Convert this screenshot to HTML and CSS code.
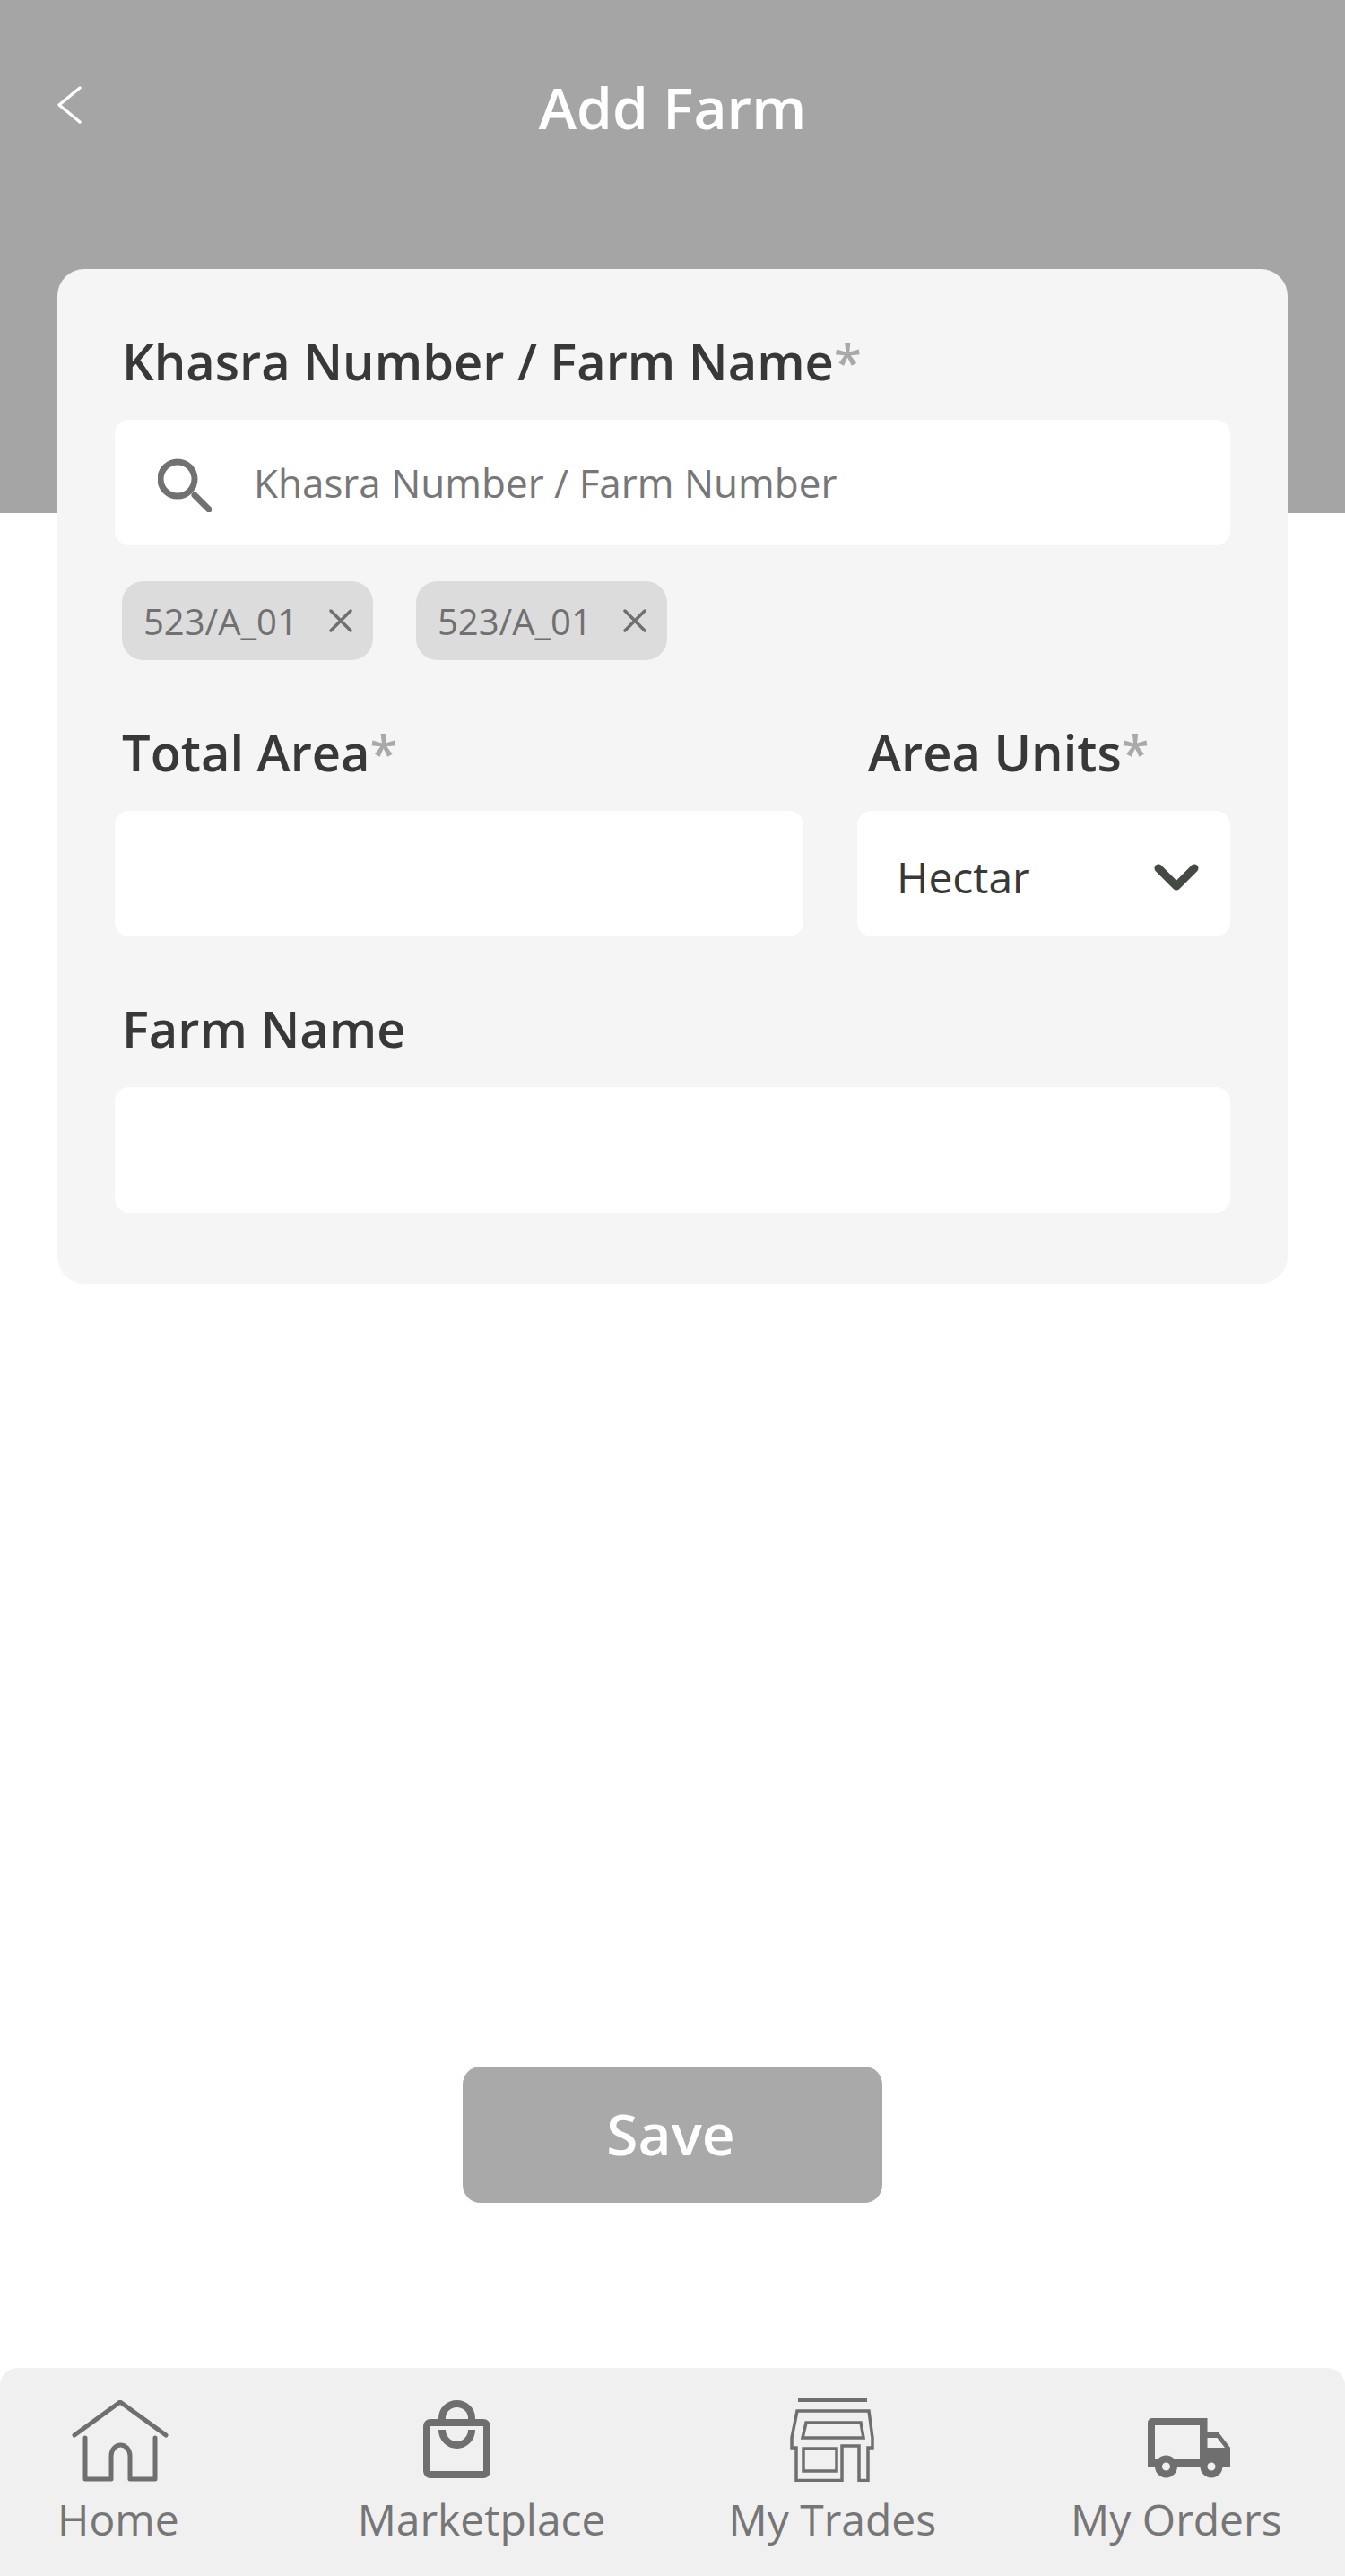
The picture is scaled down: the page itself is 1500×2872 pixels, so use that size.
FILE: index.html
```html
<!DOCTYPE html>
<html lang="en">
<head>
  <meta charset="UTF-8" />
  <meta name="viewport" content="width=device-width, initial-scale=1.0" />
  <title>Add Farm</title>
  <link rel="stylesheet" href="styles.css">
</head>
<body>
  <div class="page">
    <header class="top-bar">
      <svg class="back-icon" width="28" height="42" viewBox="0 0 28 42"><path d="M26 2 L3 21 L26 40" /></svg>
      <h1>Add Farm</h1>
    </header>

    <form class="card">
      <div class="field">
        <label class="field-label" for="khasra">Khasra Number / Farm Name<span class="req">*</span></label>
        <div class="input-box search-box">
          <svg class="search-icon" width="60" height="60" viewBox="0 0 60 60">
            <circle cx="22" cy="23" r="19" />
            <line x1="41" y1="41" x2="57" y2="57" />
          </svg>
          <input id="khasra" type="text" placeholder="Khasra Number / Farm Number" />
        </div>
        <div class="tags">
          <span class="tag">523/A_01
            <svg width="26" height="26" viewBox="0 0 26 26"><path d="M2 2 L24 24 M24 2 L2 24" /></svg>
          </span>
          <span class="tag">523/A_01
            <svg width="26" height="26" viewBox="0 0 26 26"><path d="M2 2 L24 24 M24 2 L2 24" /></svg>
          </span>
        </div>
      </div>

      <div class="field-row">
        <div class="field area-field">
          <label class="field-label" for="area">Total Area<span class="req">*</span></label>
          <input class="input-box" id="area" type="text" />
        </div>
        <div class="field units-field">
          <label class="field-label">Area Units<span class="req">*</span></label>
          <div class="input-box select-box">
            <span>Hectar</span>
            <svg width="50" height="32" viewBox="0 0 50 32"><path d="M5 6 L25 26 L45 6" /></svg>
          </div>
        </div>
      </div>

      <div class="field">
        <label class="field-label" for="farm">Farm Name</label>
        <input class="input-box" id="farm" type="text" />
      </div>
    </form>

    <div class="actions">
      <button type="button" class="save-btn">Save</button>
    </div>

    <nav class="bottom-nav">
      <a class="nav-item nav-home">
        <svg width="108" height="91" viewBox="0 0 108 91"><path d="M3 39 L54 2 L105 39" /><path d="M15 42 V88 H44 V62 A10.5 12 0 0 1 65 62 V88 H93 V42" /></svg>
        <span>Home</span>
      </a>
      <a class="nav-item nav-market">
        <svg width="75" height="87" viewBox="0 0 75 87">
          <rect x="4" y="25" width="67" height="58" rx="4" />
          <path d="M21 22 V20 A16.5 16 0 0 1 54 20 V22" />
          <path d="M21 33 A16.5 17 0 0 0 54 33" />
        </svg>
        <span>Marketplace</span>
      </a>
      <a class="nav-item nav-trades">
        <svg width="94" height="94" viewBox="0 0 94 94">
          <path class="store-bar" d="M9 2.500 H86" />
          <path d="M8 15 H88 L92 45 V56 H87 V92.500 H77 V54 H58 V92.500 H7 V56 H2 V45 Z" />
          <path d="M18 28 H79 L82 45 H14 Z" />
          <rect x="15" y="57" width="37" height="25" />
        </svg>
        <span>My Trades</span>
      </a>
      <a class="nav-item nav-orders">
        <svg width="92" height="67" viewBox="0 0 92 67">
          <path fill-rule="evenodd" d="M5 0 H66.500 V16 H79 L92 33 V54 H0 V5 A5 5 0 0 1 5 0 Z M8 8 V46 H58 V8 Z M66.500 22 V33 H86 L77.500 22 Z" />
          <circle cx="20.500" cy="54" r="8.500" />
          <circle cx="71" cy="54" r="8.500" />
        </svg>
        <span>My Orders</span>
      </a>
    </nav>
  </div>
</body>
</html>
```

FILE: styles.css
```css
* {
  box-sizing: border-box;
}
body {
  margin: 0;
  font-family: "Open Sans", sans-serif;
  background: white;
  color: #383838;
}
.page {
  display: flex;
  flex-direction: column;
  height: 2872px;
}
.top-bar {
  height: 572px;
  flex-shrink: 0;
  background: #a5a5a5;
  display: flex;
  align-items: flex-start;
  justify-content: center;
  padding-top: 76px;
}
.top-bar h1 {
  margin: 0;
  font-size: 64px;
  line-height: 88px;
  font-weight: 600;
  color: white;
}
.back-icon {
  position: absolute;
  left: 63px;
  top: 96px;
}
.back-icon path {
  fill: none;
  stroke: white;
  stroke-width: 3.500;
  stroke-linecap: round;
  stroke-linejoin: round;
}
.card {
  margin: -272px 64px 0;
  padding: 64px 64px 78px;
  height: 1131px;
  flex-shrink: 0;
  background: #f5f5f5;
  border-radius: 30px;
}
.field-label {
  display: block;
  margin-left: 8px;
  font-size: 56px;
  line-height: 76px;
  font-weight: 600;
  color: #383838;
}
.req {
  color: #a9a9a9;
}
.input-box {
  display: block;
  width: 100%;
  height: 140px;
  margin-top: 28px;
  border: none;
  border-radius: 16px;
  background: white;
}
.search-box {
  display: flex;
  align-items: center;
  padding-left: 48px;
}
.search-icon {
  flex-shrink: 0;
  margin-top: 6px;
}
.search-icon circle,
.search-icon line {
  fill: none;
  stroke: #717171;
  stroke-width: 7;
  stroke-linecap: round;
}
.search-box input {
  flex: 1;
  margin-left: 45px;
  border: none;
  outline: none;
  background: none;
  font-family: inherit;
  font-size: 44px;
}
.search-box input::placeholder {
  color: #777777;
  opacity: 1;
}
.tags {
  display: flex;
  gap: 48px;
  margin: 40px 0 0 8px;
}
.tag {
  display: flex;
  align-items: center;
  justify-content: space-between;
  width: 280px;
  height: 88px;
  padding: 0 23px 0 24px;
  border-radius: 24px;
  background: #dcdcdc;
  color: #707070;
  font-size: 40px;
}
.tag svg path {
  fill: none;
  stroke: #6f6f6f;
  stroke-width: 3.500;
  stroke-linecap: round;
}
.field-row {
  display: flex;
  gap: 60px;
  margin: 64px 0 64px;
}
.area-field {
  width: 768px;
}
.units-field {
  width: 416px;
}
.units-field .field-label {
  margin-left: 12px;
}
.select-box {
  display: flex;
  align-items: center;
  justify-content: space-between;
  padding: 7px 35px 0 44px;
  font-size: 48px;
  color: #383838;
}
.select-box svg path {
  fill: none;
  stroke: #454944;
  stroke-width: 9;
  stroke-linecap: round;
  stroke-linejoin: round;
}
.actions {
  flex: 1;
  display: flex;
  justify-content: center;
  padding-top: 873px;
}
.save-btn {
  width: 468px;
  height: 152px;
  padding: 0 4px 4px 0;
  border: none;
  border-radius: 20px;
  background: #a9a9a9;
  color: white;
  font-family: inherit;
  font-size: 64px;
  font-weight: 600;
}
.bottom-nav {
  height: 232px;
  flex-shrink: 0;
  display: flex;
  padding-left: 64px;
  background: #f0f0f0;
  border-radius: 20px 20px 0 0;
}
.nav-item {
  display: flex;
  flex-direction: column;
  align-items: center;
  color: #767676;
  font-size: 48px;
  line-height: 66px;
}
.nav-item svg {
  flex-shrink: 0;
}
.nav-market {
  margin-left: 199px;
}
.nav-trades {
  margin-left: 137px;
}
.nav-orders {
  margin-left: 150px;
}
/* icons don't sit centred over their labels, margins keep the label line at 136px */
.nav-home svg {
  margin: 36px 0 9px 4px;
}
.nav-market svg {
  margin: 36px 55px 13px 0;
}
.nav-trades svg {
  margin: 33px 0 9px 0;
}
.nav-orders svg {
  margin: 56px 0 13px 28px;
}
.nav-home path {
  fill: none;
  stroke: #6f6f6f;
  stroke-width: 5;
  stroke-linecap: round;
  stroke-linejoin: round;
}
.nav-market rect,
.nav-market path {
  fill: none;
  stroke: #6f6f6f;
  stroke-width: 8;
}
.nav-trades path,
.nav-trades rect {
  fill: none;
  stroke: #6f6f6f;
  stroke-width: 3.500;
}
.nav-trades .store-bar {
  stroke-width: 5;
}
.nav-orders path {
  fill: #6f6f6f;
}
.nav-orders circle {
  fill: #f0f0f0;
  stroke: #6f6f6f;
  stroke-width: 8;
}
```
